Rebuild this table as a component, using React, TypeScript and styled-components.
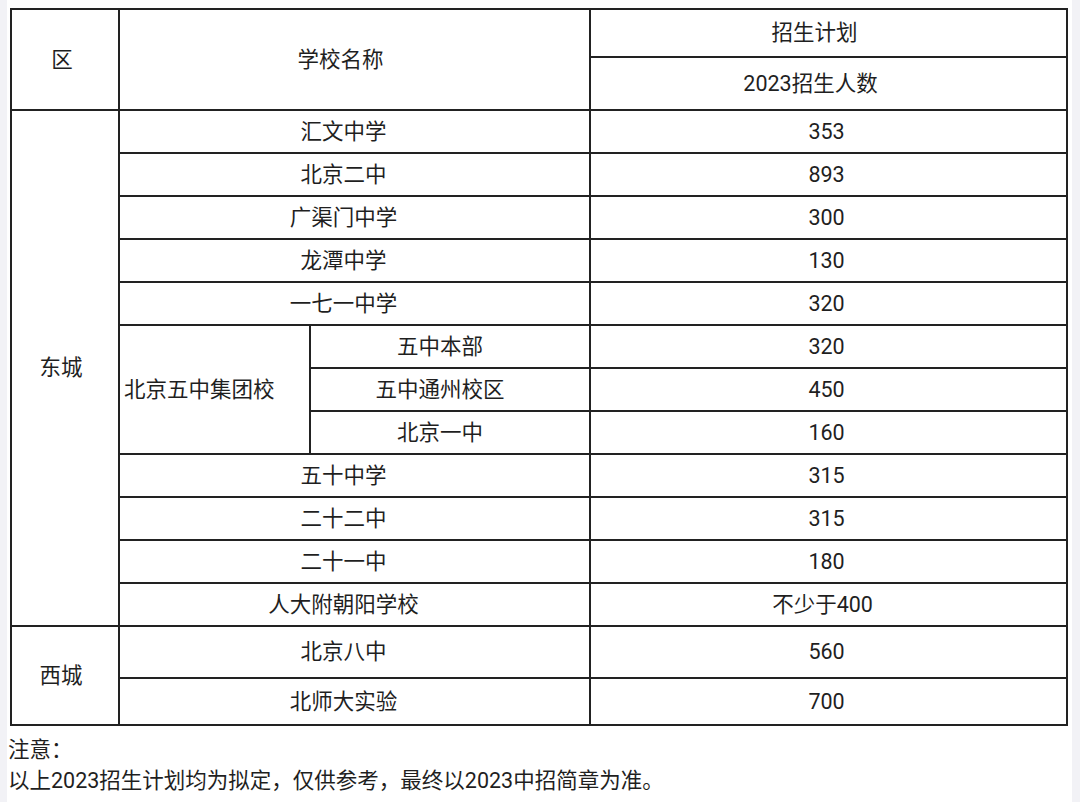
import React from 'react';
import styled, { createGlobalStyle } from 'styled-components';

const GlobalStyle = createGlobalStyle`
  html, body {
    margin: 0;
    padding: 0;
    background: #f2f2f6;
  }
  body {
    font-family: Roboto, 'Noto Sans CJK SC', sans-serif;
    color: #1f1f1f;
  }
`;

const Page = styled.div`
  width: 1065px;
  min-height: 802px;
  margin-left: 7px;
  background: #ffffff;
  padding: 8px 0 0 3px;
  box-sizing: border-box;
`;

const Table = styled.table`
  width: 1058px;
  table-layout: fixed;
  border-collapse: collapse;
  font-size: 21.5px;
`;

const Cell = styled.td<{ $left?: boolean; $shift?: number }>`
  border: 2px solid #222;
  text-align: ${(p) => (p.$left ? 'left' : 'center')};
  padding: ${(p) => (p.$left ? '0 0 0 4px' : `0 ${(p.$shift ?? 0) * 2}px 0 0`)};
  vertical-align: middle;
  line-height: 1;
  white-space: nowrap;
`;

const Row = styled.tr<{ $h: number }>`
  height: ${(p) => p.$h}px;
`;

const Notes = styled.div`
  margin-top: 8px;
  margin-left: -2px;
  font-size: 21.5px;
  line-height: 31px;
  color: #1f1f1f;
`;

type Item = { name: string; count: string; h?: number; shift?: number };

const dongcheng: Item[] = [
  { name: '汇文中学', count: '353' },
  { name: '北京二中', count: '893' },
  { name: '广渠门中学', count: '300' },
  { name: '龙潭中学', count: '130' },
  { name: '一七一中学', count: '320' },
];

const group: Item[] = [
  { name: '五中本部', count: '320' },
  { name: '五中通州校区', count: '450' },
  { name: '北京一中', count: '160' },
];

const dongcheng2: Item[] = [
  { name: '五十中学', count: '315' },
  { name: '二十二中', count: '315' },
  { name: '二十一中', count: '180' },
  { name: '人大附朝阳学校', count: '不少于400', shift: 6 },
];

const xicheng: Item[] = [
  { name: '北京八中', count: '560', h: 52 },
  { name: '北师大实验', count: '700', h: 47 },
];

const App: React.FC = () => {
  const total = dongcheng.length + group.length + dongcheng2.length;
  return (
    <>
      <GlobalStyle />
      <Page>
        <Table>
          <colgroup>
            <col style={{ width: 108 }} />
            <col style={{ width: 191 }} />
            <col style={{ width: 280 }} />
            <col style={{ width: 477 }} />
          </colgroup>
          <tbody>
            <Row $h={48}>
              <Cell rowSpan={2} $shift={3}>区</Cell>
              <Cell rowSpan={2} colSpan={2} $shift={14}>学校名称</Cell>
              <Cell $shift={14}>招生计划</Cell>
            </Row>
            <Row $h={53}>
              <Cell $shift={18}>2023招生人数</Cell>
            </Row>
            {dongcheng.map((s, i) => (
              <Row $h={43} key={s.name}>
                {i === 0 && <Cell rowSpan={total} $shift={4}>东城</Cell>}
                <Cell colSpan={2} $shift={11}>{s.name}</Cell>
                <Cell $shift={s.shift ?? 2}>{s.count}</Cell>
              </Row>
            ))}
            {group.map((s, i) => (
              <Row $h={43} key={s.name}>
                {i === 0 && (
                  <Cell rowSpan={group.length} $left>
                    北京五中集团校
                  </Cell>
                )}
                <Cell $shift={10}>{s.name}</Cell>
                <Cell $shift={s.shift ?? 2}>{s.count}</Cell>
              </Row>
            ))}
            {dongcheng2.map((s) => (
              <Row $h={43} key={s.name}>
                <Cell colSpan={2} $shift={11}>{s.name}</Cell>
                <Cell $shift={s.shift ?? 2}>{s.count}</Cell>
              </Row>
            ))}
            {xicheng.map((s, i) => (
              <Row $h={s.h ?? 43} key={s.name}>
                {i === 0 && <Cell rowSpan={xicheng.length} $shift={4}>西城</Cell>}
                <Cell colSpan={2} $shift={11}>{s.name}</Cell>
                <Cell $shift={s.shift ?? 2}>{s.count}</Cell>
              </Row>
            ))}
          </tbody>
        </Table>
        <Notes>
          注意：
          <br />
          以上2023招生计划均为拟定，仅供参考，最终以2023中招简章为准。
        </Notes>
      </Page>
    </>
  );
};

export default App;
